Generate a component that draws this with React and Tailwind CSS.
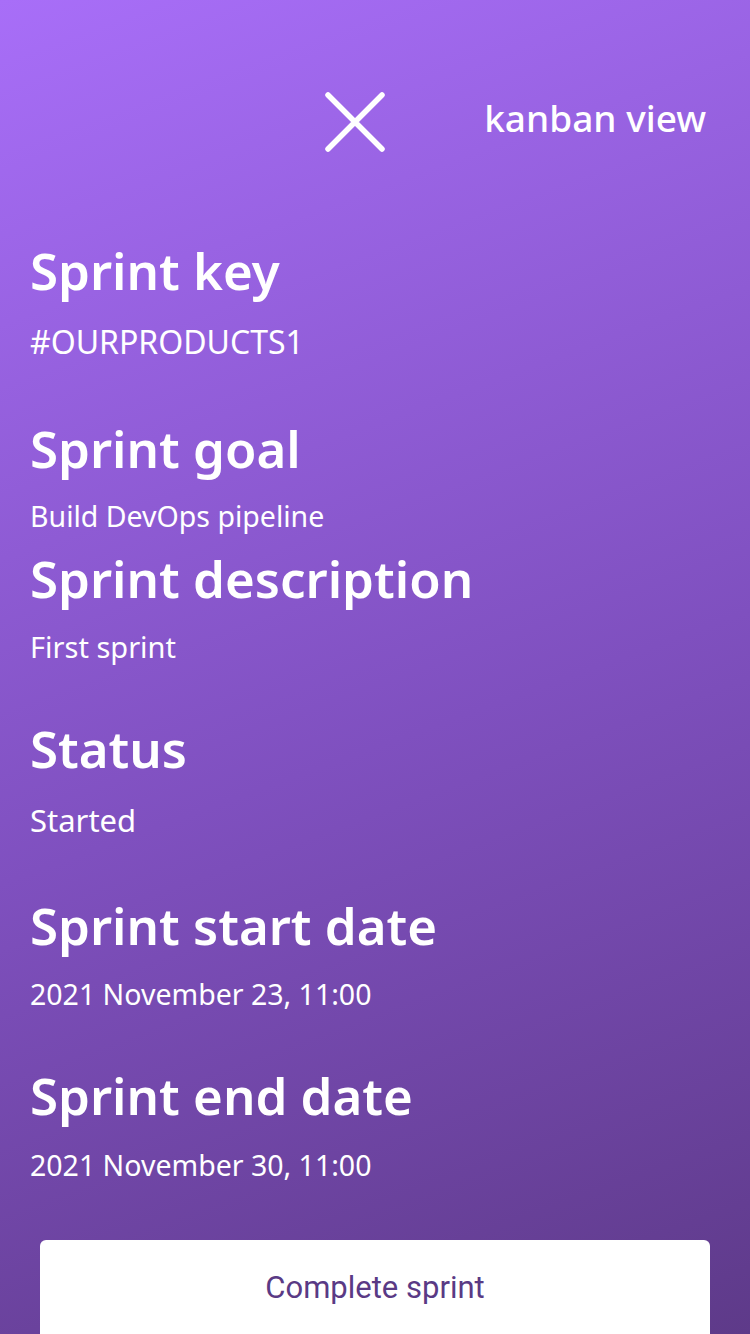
export default function App() {
  const font = { fontFamily: '"Noto Sans", "Noto Sans CJK KR", sans-serif' };
  const h = "h-[62px] text-[51px] leading-[62px] font-semibold whitespace-nowrap";
  return (
    <div
      className="w-[750px] h-[1334px] overflow-hidden text-white bg-[linear-gradient(160deg,#a86ef8_0%,#7f50bf_55%,#5e3a89_100%)]"
      style={font}
    >
      <div className="h-[239px] flex items-start pt-[92px]">
        <div className="w-[325px] shrink-0" />
        <svg width="60" height="60" viewBox="0 0 60 60" className="shrink-0">
          <path d="M3 3 L57 57 M57 3 L3 57" stroke="white" strokeWidth="5.5" strokeLinecap="round" />
        </svg>
        <div className="flex-1 flex justify-end pr-[44px] mt-[4px]">
          <span className="text-[37px] leading-[44px] font-medium whitespace-nowrap">kanban view</span>
        </div>
      </div>
      <div className="px-[30px]">
        <div className={h}>Sprint key</div>
        <div className="mt-[21px] text-[32px] leading-[40px]">#OURPRODUCTS1</div>
        <div className={`mt-[55px] ${h}`}>Sprint goal</div>
        <div className="mt-[17px] text-[28.5px] leading-[40px]">Build DevOps pipeline</div>
        <div className={`mt-[11px] ${h}`}>Sprint description</div>
        <div className="mt-[18px] text-[29px] leading-[40px]">First sprint</div>
        <div className={`mt-[50px] ${h}`}>Status</div>
        <div className="mt-[21px] text-[31px] leading-[40px]">Started</div>
        <div className={`mt-[54px] ${h}`}>Sprint start date</div>
        <div className="mt-[18px] text-[28.5px] leading-[40px]">2021 November 23, 11:00</div>
        <div className={`mt-[50px] ${h}`}>Sprint end date</div>
        <div className="mt-[19px] text-[28.5px] leading-[40px]">2021 November 30, 11:00</div>
      </div>
      <div className="px-[40px] mt-[55px]">
        <div className="h-[110px] bg-white rounded-[6px] flex items-start justify-center pt-[26px]">
          <span
            className="text-[31px] leading-[44px] text-[#5a3a85]"
            style={{ fontFamily: 'Roboto, "Liberation Sans", sans-serif' }}
          >
            Complete sprint
          </span>
        </div>
      </div>
    </div>
  );
}
